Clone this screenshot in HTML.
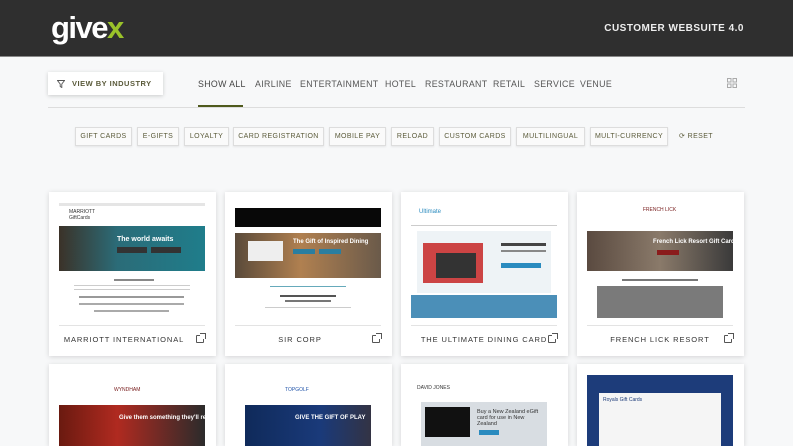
<!DOCTYPE html><html><head><style>
*{margin:0;padding:0;box-sizing:border-box}
html,body{width:793px;height:446px;overflow:hidden}
body{background:#f7f8f9;font-family:"Liberation Sans",sans-serif;position:relative;white-space:nowrap}
.hdr{position:absolute;left:0;top:0;width:793px;height:57px;background:#2f2f2f;border-bottom:1px solid #888}
.logo{position:absolute;left:51px;top:10px;font-size:31px;font-weight:bold;color:#fff;letter-spacing:-1.5px}
.logo span{color:#9ac22a}
.cw{position:absolute;right:49px;top:23px;color:#eee;font-size:10px;font-weight:bold;letter-spacing:.5px}
.vbi{position:absolute;left:48px;top:72px;width:115px;height:23px;background:#fff;box-shadow:0 1px 4px rgba(0,0,0,.18);font-size:7.5px;color:#5a5a3a;letter-spacing:.5px;padding:7px 0 0 24px;font-weight:bold}
.nav{position:absolute;top:79px;font-size:8.8px;color:#555;letter-spacing:.35px}
.line{position:absolute;left:48px;top:107px;width:697px;height:1px;background:#ddd}
.ul{position:absolute;left:198px;top:105px;width:45px;height:2px;background:#4f5a1d}
.tag{position:absolute;top:127px;height:19px;border:1px solid #ddd;background:#fafafa;box-shadow:0 1px 2px rgba(0,0,0,.08);font-size:7px;color:#5b5b3a;letter-spacing:.4px;text-align:center;line-height:17px;overflow:hidden}
.card{position:absolute;width:167px;height:164px;background:#fff;box-shadow:0 1px 5px rgba(0,0,0,.15);overflow:hidden}
.shot{position:absolute;left:10px;top:11px;width:146px;height:115px;background:#fff;overflow:hidden}
.sep{position:absolute;left:10px;top:133px;width:146px;height:1px;background:#e3e3e3}
.lbl{position:absolute;left:0;width:150px;top:143px;text-align:center;font-size:7.5px;letter-spacing:.9px;color:#333}
.ext{position:absolute;left:147px;top:143px;width:8px;height:8px;border:1px solid #555;border-radius:1px}
.ext:after{content:"";position:absolute;right:-3px;top:-3px;width:5px;height:5px;border-top:1.5px solid #555;border-right:1.5px solid #555;background:#fff}
.g{position:absolute;background:#ccc}
.b{height:82px}
</style></head><body>
<div class="hdr"><div class="logo">give<span>x</span></div><div class="cw">CUSTOMER WEBSUITE 4.0</div></div>
<div class="vbi"><svg style="position:absolute;left:9px;top:8px" width="8" height="8" viewBox="0 0 8 8"><path d="M0.5 0.5H7.5L4.8 4V7.5L3.2 6.5V4Z" fill="none" stroke="#555" stroke-width="0.9"/></svg>VIEW BY INDUSTRY</div>
<div class="nav" style="left:198px;color:#444">SHOW ALL</div>
<div class="nav" style="left:255px">AIRLINE</div>
<div class="nav" style="left:300px">ENTERTAINMENT</div>
<div class="nav" style="left:385px">HOTEL</div>
<div class="nav" style="left:425px">RESTAURANT</div>
<div class="nav" style="left:493px">RETAIL</div>
<div class="nav" style="left:534px">SERVICE</div>
<div class="nav" style="left:580px">VENUE</div>
<svg style="position:absolute;left:727px;top:78px" width="10" height="10"><g fill="none" stroke="#aaa" stroke-width="1"><rect x=".5" y=".5" width="3.5" height="3.5"/><rect x="6" y=".5" width="3.5" height="3.5"/><rect x=".5" y="6" width="3.5" height="3.5"/><rect x="6" y="6" width="3.5" height="3.5"/></g></svg>
<div class="line"></div><div class="ul"></div>
<div class="tag" style="left:75px;width:57px">GIFT CARDS</div>
<div class="tag" style="left:137px;width:42px">E-GIFTS</div>
<div class="tag" style="left:184px;width:45px">LOYALTY</div>
<div class="tag" style="left:233px;width:91px">CARD REGISTRATION</div>
<div class="tag" style="left:329px;width:57px">MOBILE PAY</div>
<div class="tag" style="left:391px;width:43px">RELOAD</div>
<div class="tag" style="left:439px;width:72px">CUSTOM CARDS</div>
<div class="tag" style="left:516px;width:69px">MULTILINGUAL</div>
<div class="tag" style="left:590px;width:78px">MULTI-CURRENCY</div>
<div style="position:absolute;left:679px;top:132px;font-size:7px;color:#5b5b3a;letter-spacing:.4px">⟳ RESET</div>

<div class="card" style="left:49px;top:192px"><div class="shot">
<div class="g" style="left:0;top:0;width:146px;height:3px;background:#e5e5e5"></div>
<div style="position:absolute;left:10px;top:6px;font-size:5px;color:#333;line-height:6px">MARRIOTT<br>GiftCards</div>
<div class="g" style="left:0;top:23px;width:146px;height:45px;background:linear-gradient(90deg,#3b3228,#2b6c78 40%,#1f7d8b)"></div>
<div style="position:absolute;left:58px;top:33px;font-size:7px;color:#fff;font-weight:bold">The world awaits</div>
<div class="g" style="left:58px;top:44px;width:30px;height:6px;background:#333"></div><div class="g" style="left:92px;top:44px;width:30px;height:6px;background:#333"></div>
<div class="g" style="left:55px;top:76px;width:40px;height:2px;background:#888"></div>
<div class="g" style="left:15px;top:82px;width:116px;height:1px"></div><div class="g" style="left:15px;top:86px;width:116px;height:1px"></div>
<div class="g" style="left:20px;top:93px;width:105px;height:2px;background:#999"></div><div class="g" style="left:20px;top:100px;width:105px;height:2px;background:#aaa"></div><div class="g" style="left:35px;top:107px;width:75px;height:2px;background:#aaa"></div>
</div><div class="sep"></div><div class="lbl">MARRIOTT INTERNATIONAL</div><div class="ext"></div></div>

<div class="card" style="left:225px;top:192px"><div class="shot">
<div class="g" style="left:0;top:5px;width:146px;height:19px;background:#080808"></div>
<div class="g" style="left:0;top:30px;width:146px;height:45px;background:linear-gradient(90deg,#5a4a3a,#b08050 45%,#6a5a4a)"></div>
<div style="position:absolute;left:58px;top:36px;font-size:6px;color:#fff;font-weight:bold">The Gift of Inspired Dining</div>
<div class="g" style="left:13px;top:38px;width:35px;height:20px;background:#eee"></div>
<div class="g" style="left:58px;top:46px;width:22px;height:5px;background:#2a7ea0"></div><div class="g" style="left:84px;top:46px;width:22px;height:5px;background:#2a7ea0"></div>
<div class="g" style="left:35px;top:83px;width:76px;height:1px;background:#6ab"></div><div class="g" style="left:45px;top:92px;width:56px;height:2px;background:#555"></div><div class="g" style="left:50px;top:97px;width:46px;height:2px;background:#777"></div><div class="g" style="left:30px;top:104px;width:86px;height:1px"></div>
</div><div class="sep"></div><div class="lbl">SIR CORP</div><div class="ext"></div></div>

<div class="card" style="left:401px;top:192px"><div class="shot">
<div style="position:absolute;left:8px;top:6px;font-size:6px;color:#2a8bbf">Ultimate</div>
<div class="g" style="left:0;top:22px;width:146px;height:1px"></div>
<div class="g" style="left:6px;top:28px;width:134px;height:62px;background:#eef3f6"></div>
<div class="g" style="left:12px;top:40px;width:60px;height:40px;background:#c44"></div><div class="g" style="left:25px;top:50px;width:40px;height:25px;background:#333"></div>
<div class="g" style="left:90px;top:40px;width:45px;height:3px;background:#444"></div><div class="g" style="left:90px;top:47px;width:45px;height:2px;background:#888"></div><div class="g" style="left:90px;top:60px;width:40px;height:5px;background:#2a8bbf"></div>
<div class="g" style="left:0;top:92px;width:146px;height:23px;background:#4b8fb8"></div>
</div><div class="sep"></div><div class="lbl" style="left:8px">THE ULTIMATE DINING CARD</div><div class="ext"></div></div>

<div class="card" style="left:577px;top:192px"><div class="shot">
<div style="position:absolute;left:55px;top:4px;font-size:5px;color:#7a2020;text-align:center;width:35px">FRENCH LICK</div>
<div class="g" style="left:0;top:28px;width:146px;height:40px;background:linear-gradient(90deg,#5a4a40,#8a7a6a 50%,#3a3a3a)"></div>
<div style="position:absolute;left:66px;top:36px;font-size:6px;color:#fff;font-weight:bold">French Lick Resort Gift Cards</div>
<div class="g" style="left:70px;top:47px;width:22px;height:5px;background:#8a1c1c"></div>
<div class="g" style="left:35px;top:76px;width:76px;height:2px;background:#777"></div>
<div class="g" style="left:10px;top:83px;width:126px;height:32px;background:#7a7a7a"></div>
</div><div class="sep"></div><div class="lbl" style="left:8px">FRENCH LICK RESORT</div><div class="ext"></div></div>

<div class="card b" style="left:49px;top:364px"><div class="shot">
<div style="position:absolute;left:55px;top:12px;font-size:5px;color:#7a2020">WYNDHAM</div>
<div class="g" style="left:0;top:30px;width:146px;height:60px;background:linear-gradient(90deg,#6a1a10,#b02a20 40%,#2b2b2b)"></div>
<div style="position:absolute;left:60px;top:40px;font-size:6px;color:#fff;font-weight:bold">Give them something they'll really</div>
</div></div>
<div class="card b" style="left:225px;top:364px"><div class="shot">
<div style="position:absolute;left:50px;top:12px;font-size:5px;color:#2255aa">TOPGOLF</div>
<div class="g" style="left:10px;top:30px;width:126px;height:50px;background:linear-gradient(90deg,#0f2a5a,#1a3a7a 60%,#334)"></div>
<div style="position:absolute;left:60px;top:40px;font-size:6px;color:#fff;font-weight:bold">GIVE THE GIFT OF PLAY</div>
</div></div>
<div class="card b" style="left:401px;top:364px"><div class="shot">
<div style="position:absolute;left:6px;top:10px;font-size:5px;color:#333">DAVID JONES</div>
<div class="g" style="left:10px;top:27px;width:126px;height:45px;background:#d8dde2"></div>
<div class="g" style="left:14px;top:32px;width:45px;height:30px;background:#111"></div>
<div style="position:absolute;left:66px;top:34px;font-size:5.5px;color:#333;white-space:normal;width:65px">Buy a New Zealand eGift card for use in New Zealand</div>
<div class="g" style="left:68px;top:55px;width:20px;height:5px;background:#2a8bbf"></div>
</div></div>
<div class="card b" style="left:577px;top:364px"><div class="shot" style="background:#1d3c7a">
<div class="g" style="left:12px;top:18px;width:122px;height:97px;background:#f5f5f5"></div>
<div style="position:absolute;left:16px;top:22px;font-size:5px;color:#1d3c7a">Royals Gift Cards</div>
</div></div>
</body></html>
